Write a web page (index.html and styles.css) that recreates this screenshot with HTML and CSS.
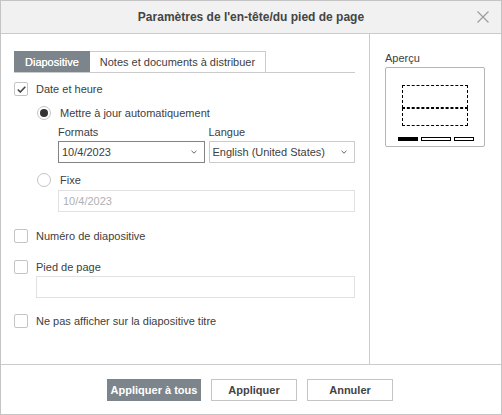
FILE: index.html
```html
<!DOCTYPE html>
<html>
<head>
<meta charset="utf-8">
<link rel="stylesheet" href="styles.css">
</head>
<body>
<div class="dialog">
  <div class="header">
    <div class="title">Paramètres de l'en-tête/du pied de page</div>
    <svg class="close" width="12" height="12" viewBox="0 0 12 12"><path d="M0.5 0.5 L11.5 11.5 M11.5 0.5 L0.5 11.5" stroke="#9a9a9a" stroke-width="1.1" fill="none"/></svg>
  </div>
  <div class="body">
    <div class="left">
      <div class="tabs">
        <div class="tab active">Diapositive</div>
        <div class="tab">Notes et documents à distribuer</div>
      </div>

      <div class="row r-date">
        <span class="cb"><svg width="9" height="7" viewBox="0 0 9 7"><path d="M0.8 3.5 L3.3 6 L8.3 0.8" stroke="#444" stroke-width="1.6" fill="none"/></svg></span>
        <span>Date et heure</span>
      </div>

      <div class="row r-auto">
        <span class="rb on"></span>
        <span>Mettre à jour automatiquement</span>
      </div>

      <div class="formats">
        <div class="flabel">Formats</div>
        <div class="flabel">Langue</div>
        <div class="select focus"><span>10/4/2023</span><svg width="6" height="4" viewBox="0 0 6 4"><path d="M0.5 0.8 L3 3.2 L5.5 0.8" stroke="#666" stroke-width="1" fill="none"/></svg></div>
        <div class="select"><span>English (United States)</span><svg width="6" height="4" viewBox="0 0 6 4"><path d="M0.5 0.8 L3 3.2 L5.5 0.8" stroke="#666" stroke-width="1" fill="none"/></svg></div>
      </div>

      <div class="row r-fixe">
        <span class="rb"></span>
        <span>Fixe</span>
      </div>

      <div class="field disabled f-fixe">10/4/2023</div>

      <div class="row r-num">
        <span class="cb"></span>
        <span>Numéro de diapositive</span>
      </div>

      <div class="row r-pied">
        <span class="cb"></span>
        <span>Pied de page</span>
      </div>

      <div class="field f-pied"></div>

      <div class="row r-ne">
        <span class="cb"></span>
        <span>Ne pas afficher sur la diapositive titre</span>
      </div>
    </div>
    <div class="right">
      <div class="plabel">Aperçu</div>
      <div class="preview">
        <div class="drect d1"></div>
        <div class="drect d2"></div>
        <div class="bars">
          <span class="bar filled b20"></span>
          <span class="bar b30"></span>
          <span class="bar b20"></span>
        </div>
      </div>
    </div>
  </div>
  <div class="footer">
    <button class="btn primary">Appliquer à tous</button>
    <button class="btn">Appliquer</button>
    <button class="btn">Annuler</button>
  </div>
</div>
</body>
</html>
```
FILE: styles.css
```css
* { box-sizing: border-box; }
html, body { margin: 0; padding: 0; }
body {
  font-family: "Liberation Sans", Arial, sans-serif;
  font-size: 11px;
  color: #404040;
  background: #fff;
}
.dialog {
  width: 502px;
  height: 415px;
  border: 1px solid #c4c4c4;
  display: flex;
  flex-direction: column;
  background: #fff;
}
.header {
  height: 33px;
  flex: none;
  background: #f1f1f1;
  border-bottom: 1px solid #cbcbcb;
  display: grid;
  grid-template-columns: 1fr auto 1fr;
  align-items: center;
}
.title {
  grid-column: 2;
  font-size: 12px;
  font-weight: bold;
  color: #444;
}
.close {
  grid-column: 3;
  justify-self: end;
  margin-right: 12px;
  display: block;
}
.body {
  flex: 1;
  display: flex;
  min-height: 0;
}
.left {
  width: 369px;
  flex: none;
  border-right: 1px solid #cbcbcb;
  padding: 17px 14px 0 13px;
}
.right {
  flex: 1;
  padding: 17px 0 0 15px;
}

/* tabs */
.tabs {
  display: flex;
  border-bottom: 1px solid #cbcbcb;
}
.tab {
  height: 21px;
  line-height: 20px;
  padding: 0 10px;
  border: 1px solid #cbcbcb;
  border-bottom: none;
  white-space: nowrap;
}
.tab + .tab { border-left: none; }
.tab.active {
  background: #7d858c;
  border-color: #7d858c;
  color: #fff;
  text-shadow: 0 0 0.4px #fff;
}

/* rows */
.row {
  display: flex;
  align-items: center;
  height: 14px;
  line-height: 14px;
  white-space: nowrap;
}
.cb {
  width: 14px;
  height: 14px;
  flex: none;
  border: 1px solid #c4c4c4;
  border-radius: 2px;
  margin-right: 8px;
  display: flex;
  align-items: center;
  justify-content: center;
}
.cb svg { display: block; }
.rb {
  width: 14px;
  height: 14px;
  flex: none;
  border: 1px solid #c4c4c4;
  border-radius: 50%;
  margin-right: 9px;
  display: flex;
  align-items: center;
  justify-content: center;
}
.rb.on::after {
  content: "";
  width: 8px;
  height: 8px;
  border-radius: 50%;
  background: #333;
}
.r-date { margin-top: 9px; }
.r-auto { margin-top: 10px; margin-left: 23px; }
.r-fixe { margin-top: 10px; margin-left: 23px; }
.r-num { margin-top: 17px; }
.r-pied { margin-top: 17px; }
.r-ne { margin-top: 16px; }

/* formats */
.formats {
  margin: 5px 0 0 44px;
  display: grid;
  grid-template-columns: 1fr 1fr;
  column-gap: 4px;
  row-gap: 2px;
}
.flabel { line-height: 14px; height: 14px; }
.select {
  height: 22px;
  border: 1px solid #cbcbcb;
  padding: 0 7px 0 3px;
  display: flex;
  align-items: center;
  justify-content: space-between;
  white-space: nowrap;
}
.select.focus { border-color: #848484; }
.select svg { display: block; flex: none; }

.field {
  height: 22px;
  border: 1px solid #e1e1e1;
  padding: 0 4px;
  display: flex;
  align-items: center;
}
.field.disabled { color: #b0b0b0; }
.f-fixe { margin: 3px 0 0 44px; }
.f-pied { margin: 2px 0 0 22px; }

/* preview */
.plabel { line-height: 14px; height: 14px; }
.preview {
  margin-top: 2px;
  width: 100px;
  height: 80px;
  border: 1px solid #b5b5b5;
  border-radius: 2px;
  display: flex;
  flex-direction: column;
  align-items: center;
  padding-top: 17px;
}
.drect {
  width: 66px;
  border: 1px dashed #000;
  flex: none;
}
.d1 { height: 23px; }
.d2 { height: 18px; }
.bars {
  margin-top: 11px;
  display: flex;
  gap: 3px;
  padding-left: 1px;
}
.bar {
  height: 4px;
  border: 1px solid #000;
  display: block;
}
.bar.filled { background: #000; }
.b20 { width: 20px; }
.b30 { width: 30px; }

/* footer */
.footer {
  height: 50px;
  flex: none;
  border-top: 1px solid #cbcbcb;
  display: flex;
  justify-content: center;
  align-items: flex-start;
  gap: 10px;
  padding: 14px 2px 0 0;
}
.btn {
  height: 22px;
  width: 86px;
  margin: 0;
  padding: 0;
  border: 1px solid #c4c4c4;
  background: #fff;
  font-family: inherit;
  font-size: 11px;
  font-weight: bold;
  color: #444;
  display: flex;
  align-items: center;
  justify-content: center;
}
.btn.primary {
  width: 94px;
  background: #7d858c;
  border-color: #7d858c;
  color: #fff;
}
```
